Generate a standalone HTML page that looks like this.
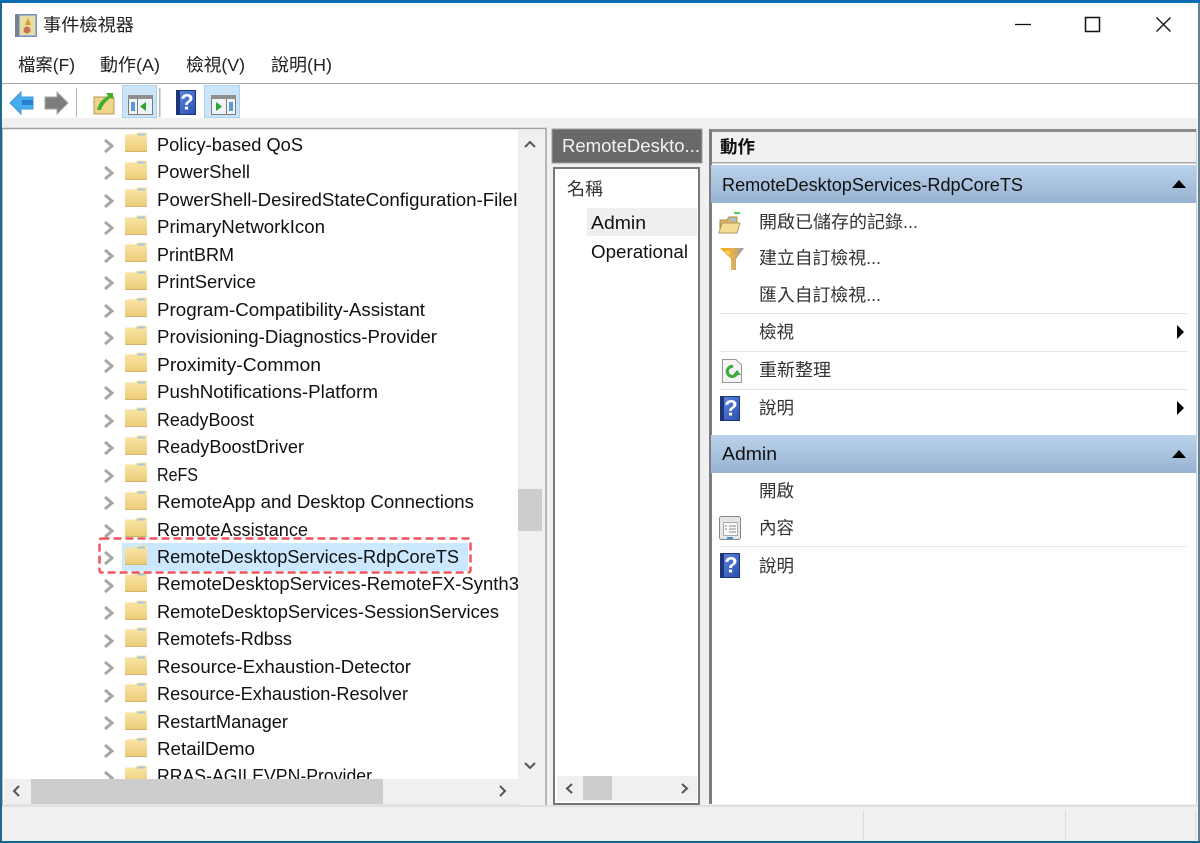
<!DOCTYPE html>
<html><head><meta charset="utf-8"><style>
html,body{margin:0;padding:0;background:#fff}
svg{display:block;filter:blur(.3px)}
text{font-family:"Liberation Sans","Noto Sans CJK TC",sans-serif;font-size:18.5px;fill:#111}
.c{font-size:17.5px;fill:#333}
.m{font-size:17.5px;fill:#222}
</style></head><body>
<svg xmlns="http://www.w3.org/2000/svg" width="1200" height="843" viewBox="0 0 1200 843">
<defs>
<linearGradient id="band" x1="0" y1="0" x2="0" y2="1"><stop offset="0" stop-color="#bad2ea"/><stop offset="1" stop-color="#97b2d2"/></linearGradient>
<linearGradient id="fold" x1="0" y1="0" x2="0" y2="1"><stop offset="0" stop-color="#fae7a8"/><stop offset="1" stop-color="#eccb78"/></linearGradient>
<linearGradient id="hlp" x1="0" y1="0" x2="1" y2="1"><stop offset="0" stop-color="#5f8ae0"/><stop offset="1" stop-color="#2a4fae"/></linearGradient>
<linearGradient id="fun" x1="0" y1="0" x2="1" y2="0"><stop offset="0" stop-color="#f5a81c"/><stop offset=".5" stop-color="#e6b24a"/><stop offset="1" stop-color="#8e9aab"/></linearGradient>
<symbol id="f" width="22" height="22" viewBox="0 0 22 22" overflow="visible">
<path d="M0 2.500H10L11.500 .5H22V20H0Z" fill="url(#fold)"/>
<path d="M0 19H22V20H0Z" fill="#d4b46c"/>
<path d="M13 1.500H20V3.500H12Z" fill="#a9c4da"/>
</symbol>
<symbol id="h" width="20" height="26" viewBox="0 0 20 26" overflow="visible">
<rect x=".5" y=".5" width="19" height="24" fill="url(#hlp)" stroke="#1d3478"/>
<rect x="1" y="1" width="3" height="23" fill="#1d3478"/>
<text x="11" y="19.500" text-anchor="middle" style="font-size:22px;font-weight:bold;fill:#fff">?</text>
</symbol>
<symbol id="a" width="12" height="16" viewBox="0 0 12 16" overflow="visible">
<path d="M2 2L9 8L2 14" fill="none" stroke="#a6a6a6" stroke-width="3"/>
</symbol>
<clipPath id="tc"><rect x="0" y="130" width="518" height="649"/></clipPath>
</defs>

<!-- base -->
<rect width="1200" height="843" fill="#f0f0f0"/>
<rect width="1200" height="84" fill="#fff"/>
<rect width="1200" height="3" fill="#0d6db3"/>
<rect x="0" y="83" width="1200" height="1.500" fill="#a8a8a8"/>
<rect y="84" width="1200" height="34" fill="#fff"/>

<!-- title -->
<g>
<rect x="15.500" y="14.500" width="21" height="22" fill="#9db3d0" stroke="#7d90ad"/>
<rect x="20" y="16" width="15" height="19" fill="#e9dca4"/>
<rect x="15" y="15" width="4" height="22" fill="#77808f"/>
<path d="M28 18L31 25H25Z" fill="#d99a2b"/>
<circle cx="27" cy="30" r="3.500" fill="#c4724f"/>
</g>
<text x="43" y="31" textLength="91" lengthAdjust="spacingAndGlyphs" class="m">事件檢視器</text>
<path d="M1015 24.500H1031" stroke="#111" stroke-width="1.300"/>
<rect x="1085.500" y="17.500" width="14" height="14" fill="none" stroke="#111" stroke-width="1.500"/>
<path d="M1156.500 17.500L1170.500 31.500M1170.500 17.500L1156.500 31.500" stroke="#111" stroke-width="1.300"/>

<!-- menu -->
<text x="18" y="71" textLength="57" lengthAdjust="spacingAndGlyphs" class="m">檔案(F)</text>
<text x="100" y="71" textLength="60" lengthAdjust="spacingAndGlyphs" class="m">動作(A)</text>
<text x="186" y="71" textLength="59" lengthAdjust="spacingAndGlyphs" class="m">檢視(V)</text>
<text x="271" y="71" textLength="61" lengthAdjust="spacingAndGlyphs" class="m">說明(H)</text>

<!-- toolbar -->
<path d="M10 103L21 92V97H33V109H21V114Z" fill="#46adf0" stroke="#4a97d8"/>
<path d="M22 100H33V105H22Z" fill="#2a7fd0"/>
<path d="M68 103L57 92V97H45V109H57V114Z" fill="#7c7c7c" stroke="#a8a8a8"/>
<rect x="76" y="88" width="1" height="29" fill="#b5b5b5"/>
<path d="M94 97H114V114H94Z" fill="#f0d48a" stroke="#b59a5c"/>
<path d="M97 110C99 102 102 100 108 96L106 93H113V99L110 98C106 102 103 104 101 110Z" fill="#3fae2a"/>
<rect x="122.500" y="85.500" width="34" height="32" fill="#cce4f7" stroke="#a9d2f3"/>
<rect x="128.500" y="95.500" width="24" height="19" fill="#eef4f8" stroke="#7b7b7b"/>
<rect x="128" y="95" width="25" height="4" fill="#8f8f8f"/>
<rect x="131" y="102" width="4" height="9" fill="#5c9ad6"/>
<rect x="137" y="99" width="1" height="15" fill="#7b7b7b"/>
<path d="M146 102V111L140 106.500Z" fill="#2fa52f"/>
<rect x="159" y="88" width="1.500" height="29" fill="#b5b5b5"/>
<use href="#h" x="176" y="90"/>
<rect x="204.500" y="85.500" width="35" height="32" fill="#cce4f7" stroke="#a9d2f3"/>
<rect x="211.500" y="95.500" width="24" height="19" fill="#eef4f8" stroke="#7b7b7b"/>
<rect x="211" y="95" width="25" height="4" fill="#8f8f8f"/>
<path d="M216 102V111L222 106.500Z" fill="#2fa52f"/>
<rect x="226" y="99" width="1" height="15" fill="#7b7b7b"/>
<rect x="229" y="102" width="4" height="9" fill="#5c9ad6"/>

<!-- tree panel -->
<rect x="2" y="128.500" width="544" height="677" fill="#fff" stroke="#a0a0a0" stroke-width="1.500"/>
<rect x="518" y="130" width="27" height="675" fill="#f0f0f0"/>
<rect x="518" y="489" width="24" height="42" fill="#cdcdcd"/>
<path d="M525 147L530 142L535 147" fill="none" stroke="#555" stroke-width="2"/>
<path d="M525 763L530 768L535 763" fill="none" stroke="#555" stroke-width="2"/>
<rect x="4" y="779" width="514" height="25" fill="#f0f0f0"/>
<rect x="31" y="779" width="352" height="25" fill="#cdcdcd"/>
<path d="M19 786L14 791L19 796" fill="none" stroke="#555" stroke-width="2"/>
<path d="M500 786L505 791L500 796" fill="none" stroke="#555" stroke-width="2"/>

<rect x="122" y="543" width="346" height="28" fill="#cce8ff"/>

<g clip-path="url(#tc)">
<g id="folders">
<use href="#f" x="125" y="132"/><use href="#a" x="103" y="138"/>
<use href="#f" x="125" y="160"/><use href="#a" x="103" y="165"/>
<use href="#f" x="125" y="187"/><use href="#a" x="103" y="193"/>
<use href="#f" x="125" y="215"/><use href="#a" x="103" y="220"/>
<use href="#f" x="125" y="242"/><use href="#a" x="103" y="248"/>
<use href="#f" x="125" y="270"/><use href="#a" x="103" y="275"/>
<use href="#f" x="125" y="297"/><use href="#a" x="103" y="303"/>
<use href="#f" x="125" y="325"/><use href="#a" x="103" y="330"/>
<use href="#f" x="125" y="352"/><use href="#a" x="103" y="358"/>
<use href="#f" x="125" y="380"/><use href="#a" x="103" y="385"/>
<use href="#f" x="125" y="407"/><use href="#a" x="103" y="413"/>
<use href="#f" x="125" y="435"/><use href="#a" x="103" y="440"/>
<use href="#f" x="125" y="462"/><use href="#a" x="103" y="468"/>
<use href="#f" x="125" y="490"/><use href="#a" x="103" y="495"/>
<use href="#f" x="125" y="517"/><use href="#a" x="103" y="523"/>
<use href="#f" x="125" y="545"/><use href="#a" x="103" y="550"/>
<use href="#f" x="125" y="572"/><use href="#a" x="103" y="578"/>
<use href="#f" x="125" y="600"/><use href="#a" x="103" y="605"/>
<use href="#f" x="125" y="627"/><use href="#a" x="103" y="633"/>
<use href="#f" x="125" y="655"/><use href="#a" x="103" y="660"/>
<use href="#f" x="125" y="682"/><use href="#a" x="103" y="688"/>
<use href="#f" x="125" y="710"/><use href="#a" x="103" y="715"/>
<use href="#f" x="125" y="737"/><use href="#a" x="103" y="743"/>
<use href="#f" x="125" y="765"/><use href="#a" x="103" y="770"/>
</g>
<text x="157" y="151" textLength="146" lengthAdjust="spacingAndGlyphs">Policy-based QoS</text>
<text x="157" y="178" textLength="93" lengthAdjust="spacingAndGlyphs">PowerShell</text>
<text x="157" y="206" textLength="361" lengthAdjust="spacingAndGlyphs">PowerShell-DesiredStateConfiguration-FileI</text>
<text x="157" y="233" textLength="168" lengthAdjust="spacingAndGlyphs">PrimaryNetworkIcon</text>
<text x="157" y="261" textLength="77" lengthAdjust="spacingAndGlyphs">PrintBRM</text>
<text x="157" y="288" textLength="99" lengthAdjust="spacingAndGlyphs">PrintService</text>
<text x="157" y="316" textLength="268" lengthAdjust="spacingAndGlyphs">Program-Compatibility-Assistant</text>
<text x="157" y="343" textLength="280" lengthAdjust="spacingAndGlyphs">Provisioning-Diagnostics-Provider</text>
<text x="157" y="371" textLength="164" lengthAdjust="spacingAndGlyphs">Proximity-Common</text>
<text x="157" y="398" textLength="221" lengthAdjust="spacingAndGlyphs">PushNotifications-Platform</text>
<text x="157" y="426" textLength="97" lengthAdjust="spacingAndGlyphs">ReadyBoost</text>
<text x="157" y="453" textLength="147" lengthAdjust="spacingAndGlyphs">ReadyBoostDriver</text>
<text x="157" y="481" textLength="41" lengthAdjust="spacingAndGlyphs">ReFS</text>
<text x="157" y="508" textLength="317" lengthAdjust="spacingAndGlyphs">RemoteApp and Desktop Connections</text>
<text x="157" y="536" textLength="151" lengthAdjust="spacingAndGlyphs">RemoteAssistance</text>
<text x="157" y="563" textLength="302" lengthAdjust="spacingAndGlyphs">RemoteDesktopServices-RdpCoreTS</text>
<text x="157" y="590" textLength="362" lengthAdjust="spacingAndGlyphs">RemoteDesktopServices-RemoteFX-Synth3</text>
<text x="157" y="618" textLength="342" lengthAdjust="spacingAndGlyphs">RemoteDesktopServices-SessionServices</text>
<text x="157" y="645" textLength="135" lengthAdjust="spacingAndGlyphs">Remotefs-Rdbss</text>
<text x="157" y="673" textLength="254" lengthAdjust="spacingAndGlyphs">Resource-Exhaustion-Detector</text>
<text x="157" y="700" textLength="251" lengthAdjust="spacingAndGlyphs">Resource-Exhaustion-Resolver</text>
<text x="157" y="728" textLength="131" lengthAdjust="spacingAndGlyphs">RestartManager</text>
<text x="157" y="755" textLength="98" lengthAdjust="spacingAndGlyphs">RetailDemo</text>
<text x="157" y="782" textLength="215" lengthAdjust="spacingAndGlyphs">RRAS-AGILEVPN-Provider</text>
</g>
<rect x="99.500" y="538.500" width="371" height="34" rx="2" fill="none" stroke="#f0555f" stroke-width="2.500" stroke-dasharray="8 4"/>

<!-- middle panel -->
<rect x="552" y="129" width="150" height="34" fill="#696969" stroke="#a0a0a0"/>
<text x="562" y="152" textLength="138" lengthAdjust="spacingAndGlyphs" style="fill:#f2f2f2">RemoteDeskto...</text>
<rect x="554" y="168" width="145" height="636" fill="#fff" stroke="#777" stroke-width="2"/>
<text x="567" y="195" textLength="36" lengthAdjust="spacingAndGlyphs" class="c">名稱</text>
<rect x="587" y="208" width="110" height="28" fill="#efefef"/>
<text x="591" y="229" textLength="55" lengthAdjust="spacingAndGlyphs">Admin</text>
<text x="591" y="258" textLength="97" lengthAdjust="spacingAndGlyphs">Operational</text>
<rect x="557" y="776" width="140" height="25" fill="#f0f0f0"/>
<rect x="583" y="776" width="29" height="24" fill="#cdcdcd"/>
<path d="M572 784L567 788.500L572 793" fill="none" stroke="#555" stroke-width="2"/>
<path d="M682 784L687 788.500L682 793" fill="none" stroke="#555" stroke-width="2"/>

<!-- right panel -->
<rect x="709" y="129" width="488" height="675" fill="#fff"/>
<rect x="709" y="129" width="488" height="3" fill="#8c8c8c"/>
<rect x="709" y="129" width="3" height="675" fill="#7d7d7d"/>
<rect x="712" y="132" width="485" height="30" fill="#f0f0f0"/>
<rect x="712" y="162" width="485" height="1.500" fill="#a8a8a8"/>
<rect x="1196" y="129" width="1" height="675" fill="#ccc"/>
<text x="720" y="153" textLength="35" lengthAdjust="spacingAndGlyphs" style="font-size:17.500px;font-weight:bold">動作</text>
<rect x="711" y="165" width="485" height="38" fill="url(#band)"/>
<text x="722" y="191" textLength="301" lengthAdjust="spacingAndGlyphs">RemoteDesktopServices-RdpCoreTS</text>
<path d="M1172 188L1179 180L1186 188Z" fill="#000"/>
<!-- open folder -->
<path d="M720 220H727L729 217H737V232H720Z" fill="#d9b765" stroke="#a58b4e"/>
<path d="M731 218H736V221H730Z" fill="#9fc1dc"/>
<path d="M719 233L722 223H740L737 233Z" fill="#f5dd96" stroke="#b59a5c"/>
<rect x="734" y="212" width="6" height="2" fill="#4fd04f"/>
<text x="759" y="228" textLength="159" lengthAdjust="spacingAndGlyphs" class="c">開啟已儲存的記錄...</text>
<!-- funnel -->
<path d="M720 248H744L736 259V270H731V259Z" fill="url(#fun)"/>
<path d="M724 251H730L729 255Z" fill="#ffd257"/>
<text x="759" y="264" textLength="122" lengthAdjust="spacingAndGlyphs" class="c">建立自訂檢視...</text>
<text x="759" y="301" textLength="122" lengthAdjust="spacingAndGlyphs" class="c">匯入自訂檢視...</text>
<rect x="719" y="313" width="468" height="1" fill="#e3e3e3"/>
<text x="759" y="338" textLength="35" lengthAdjust="spacingAndGlyphs" class="c">檢視</text>
<path d="M1177 325L1184 332L1177 339Z" fill="#000"/>
<rect x="719" y="351" width="468" height="1" fill="#e3e3e3"/>
<path d="M722.500 359.500H736L741.500 365V382.500H722.500Z" fill="#f4f4f4" stroke="#999"/>
<path d="M737 373A5 5 0 1 1 733 366.500" fill="none" stroke="#3cab3c" stroke-width="3"/>
<path d="M733 375H741L737 370Z" fill="#3cab3c"/>
<text x="759" y="376" textLength="72" lengthAdjust="spacingAndGlyphs" class="c">重新整理</text>
<rect x="719" y="389" width="468" height="1" fill="#e3e3e3"/>
<use href="#h" x="720" y="396"/>
<text x="759" y="414" textLength="35" lengthAdjust="spacingAndGlyphs" class="c">說明</text>
<path d="M1177 401L1184 408L1177 415Z" fill="#000"/>
<rect x="711" y="435" width="485" height="38" fill="url(#band)"/>
<text x="722" y="460" textLength="55" lengthAdjust="spacingAndGlyphs">Admin</text>
<path d="M1172 458L1179 450L1186 458Z" fill="#000"/>
<text x="759" y="497" textLength="35" lengthAdjust="spacingAndGlyphs" class="c">開啟</text>
<rect x="719.500" y="516.500" width="21" height="23" rx="2" fill="#e6e6e6" stroke="#888"/>
<rect x="723.500" y="522.500" width="14" height="13" fill="#fafafa" stroke="#aaa"/>
<path d="M729 526H736M729 529H736M729 532H736" stroke="#888"/>
<path d="M725 526H727M725 529H727" stroke="#3f8fd8"/>
<rect x="727" y="537" width="6" height="2" fill="#3f8fd8"/>
<text x="759" y="534" textLength="35" lengthAdjust="spacingAndGlyphs" class="c">內容</text>
<rect x="719" y="546" width="468" height="1" fill="#e8e8e8"/>
<use href="#h" x="720" y="553"/>
<text x="759" y="572" textLength="35" lengthAdjust="spacingAndGlyphs" class="c">說明</text>

<!-- status bar -->
<rect x="0" y="805" width="1200" height="2" fill="#e0e0e0"/>
<rect x="863" y="810" width="1" height="30" fill="#dcdcdc"/>
<rect x="1065" y="810" width="1" height="30" fill="#dcdcdc"/>
<rect x="1195" y="810" width="1" height="30" fill="#dcdcdc"/>

<!-- frame -->
<rect x="0" y="0" width="2" height="843" fill="#1b6a8e"/>
<rect x="1198" y="0" width="2" height="843" fill="#5f8498"/>
<rect x="0" y="841" width="1200" height="2" fill="#0f6691"/>
<rect width="1200" height="3" fill="#0d6db3"/>
</svg>
</body></html>
